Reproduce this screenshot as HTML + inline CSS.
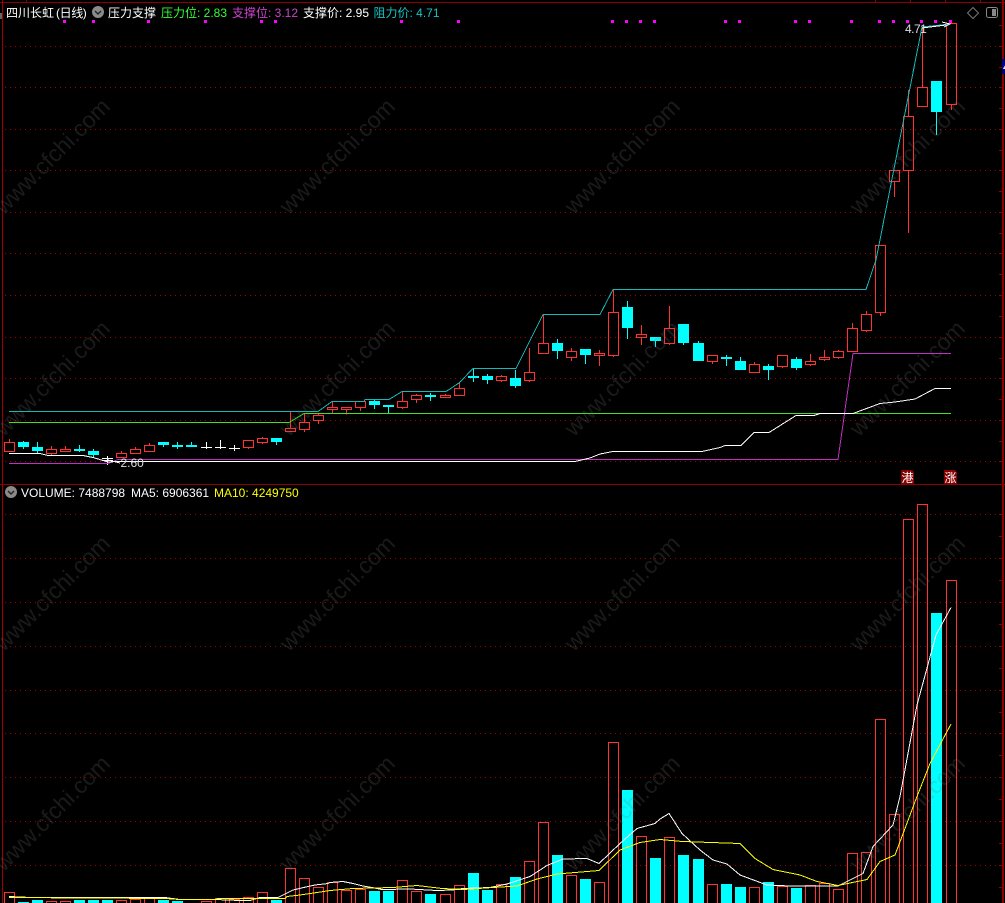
<!DOCTYPE html>
<html><head><meta charset="utf-8"><style>
html,body{margin:0;padding:0;background:#000;width:1005px;height:903px;overflow:hidden}
svg{display:block}
text{font-family:"Liberation Sans","WenQuanYi Zen Hei","Noto Sans CJK SC",sans-serif;font-size:12px}
.l{fill:none;stroke-width:1;shape-rendering:crispEdges}
.w{font-size:23px;fill:#777;opacity:.22}
</style></head><body>
<svg width="1005" height="903" viewBox="0 0 1005 903" xmlns="http://www.w3.org/2000/svg">
<rect width="1005" height="903" fill="#000"/>
<!-- grid -->
<path class="l" stroke="#a00000" stroke-dasharray="1 4" d="M5 46.5H1001M5 87.5H1001M5 129.5H1001M5 170.5H1001M5 212.5H1001M5 253.5H1001M5 295.5H1001M5 337.5H1001M5 378.5H1001M5 420.5H1001M5 461.5H1001M5 514.5H1001M5 558.5H1001M5 602.5H1001M5 646.5H1001M5 690.5H1001M5 733.5H1001M5 777.5H1001M5 821.5H1001M5 865.5H1001"/>
<!-- frame -->
<path fill="#8c0000" d="M1002 0h2v903h-2zM0 2h1005v1H0zM0 484h1005v1H0zM26 0h1v2h-1zM875 0h1v2h-1zM910 0h1v2h-1zM945 0h1v2h-1zM980 0h1v2h-1z"/>
<rect x="2" y="0" width="1" height="903" fill="#a00000"/>
<path class="l" stroke="#8c0000" d="M999 25.5h3M999 46.5h3M999 67.5h3M999 87.5h3M999 108.5h3M999 129.5h3M999 150.5h3M999 170.5h3M999 191.5h3M999 212.5h3M999 233.5h3M999 253.5h3M999 274.5h3M999 295.5h3M999 316.5h3M999 337.5h3M999 358.5h3M999 378.5h3M999 399.5h3M999 420.5h3M999 441.5h3M999 461.5h3M999 514.5h3M999 536.5h3M999 558.5h3M999 580.5h3M999 602.5h3M999 624.5h3M999 646.5h3M999 668.5h3M999 690.5h3M999 712.5h3M999 733.5h3M999 755.5h3M999 777.5h3M999 799.5h3M999 821.5h3M999 843.5h3M999 865.5h3M999 887.5h3"/>
<rect x="0" y="13" width="2" height="6" fill="#666"/>
<!-- red candles -->
<path class="l" stroke="#ff3232" d="M9.5 439V442.5M4.5 442.5h10v9h-10zM51.5 446V449.5M46.5 449.5h10v4h-10zM51.5 453.5V455M65.5 446V449.5M60.5 449.5h10v2h-10zM121.5 451V453.5M116.5 453.5h10v4h-10zM135.5 447V449.5M130.5 449.5h10v4h-10zM149.5 443V445.5M144.5 445.5h10v6h-10zM243.5 440.5h10v7h-10zM248.5 447.5V449M262.5 437V438.5M257.5 438.5h10v4h-10zM262.5 442.5V444M290.5 411V428.5M285.5 428.5h10v3h-10zM304.5 413V422.5M299.5 422.5h10v7h-10zM304.5 429.5V432M318.5 413V415.5M313.5 415.5h10v5h-10zM318.5 420.5V424M332.5 402V407.5M327.5 407.5h10v2h-10zM332.5 409.5V413M341.5 407.5h10v2h-10zM346.5 409.5V414.5M355.5 401.5h10v6h-10zM360.5 407.5V411M402.5 391.5V401.5M397.5 401.5h10v6h-10zM402.5 407.5V409M416.5 394V395.5M411.5 395.5h10v4h-10zM416.5 399.5V403M445.5 394V395.5M440.5 395.5h10v2h-10zM459.5 383V388.5M454.5 388.5h10v7h-10zM501.5 375V376.5M496.5 376.5h10v4h-10zM501.5 380.5V382M529.5 348V372.5M524.5 372.5h10v8h-10zM529.5 380.5V382M543.5 314V343.5M538.5 343.5h10v10h-10zM571.5 348V351.5M566.5 351.5h10v6h-10zM571.5 357.5V361M599.5 350V353.5M594.5 353.5h10v2h-10zM599.5 355.5V366M613.5 290V312.5M608.5 312.5h10v43h-10zM613.5 355.5V357M641.5 325V334.5M636.5 334.5h10v3h-10zM641.5 337.5V345M669.5 306V328.5M664.5 328.5h10v15h-10zM669.5 343.5V345M707.5 355.5h10v6h-10zM712.5 361.5V364M754.5 362V364.5M749.5 364.5h10v8h-10zM754.5 372.5V373M777.5 355.5h10v11h-10zM782.5 366.5V368M810.5 354V361.5M805.5 361.5h10v3h-10zM810.5 364.5V366M824.5 350V357.5M819.5 357.5h10v2h-10zM824.5 359.5V361M838.5 350V351.5M833.5 351.5h10v6h-10zM838.5 357.5V359M852.5 323V328.5M847.5 328.5h10v23h-10zM866.5 311V314.5M861.5 314.5h10v16h-10zM866.5 330.5V332M875.5 245.5h10v67h-10zM880.5 312.5V316M889.5 170.5h10v11h-10zM894.5 181.5V197M908.5 90V116.5M903.5 116.5h10v54h-10zM908.5 170.5V233M922.5 27V87.5M917.5 87.5h10v19h-10zM946.5 23.5h10v81h-10zM951.5 104.5V110"/>
<!-- cyan candles -->
<path class="l" stroke="#00ffff" d="M23.5 441V449M37.5 442V453M79.5 445V452M93.5 449V457M163.5 442V447M177.5 442V449M191.5 442V447M276.5 438V445M374.5 399V409M388.5 405V414M430.5 393V401M473.5 369V382M487.5 374V384M515.5 370V388M557.5 339V359M585.5 349V364M627.5 301V339M655.5 337V347M683.5 324V345M698.5 341V361M726.5 355V366M740.5 357V370M768.5 364V380M796.5 357V370M936.5 81V135"/>
<path fill="#00ffff" d="M18 442h11v5h-11zM32 447h11v4h-11zM74 449h11v2h-11zM88 451h11v4h-11zM158 442h11v3h-11zM172 445h11v2h-11zM186 445h11v2h-11zM271 438h11v4h-11zM369 401h11v4h-11zM383 405h11v2h-11zM425 395h11v2h-11zM468 376h11v2h-11zM482 376h11v4h-11zM510 378h11v8h-11zM552 343h11v8h-11zM580 349h11v6h-11zM622 307h11v21h-11zM650 337h11v4h-11zM678 324h11v19h-11zM693 343h11v18h-11zM721 357h11v2h-11zM735 361h11v9h-11zM763 366h11v4h-11zM791 359h11v9h-11zM931 81h11v31h-11z"/>
<!-- white doji -->
<path class="l" stroke="#fff" d="M107.5 456V465M102 458.5h11M102 460.5h11M206.5 442V449M201 447.5h11M220.5 440V449M215 447.5h11M234.5 445V451M229 448.5h11"/>
<!-- price lines -->
<polyline class="l" stroke="#44e022" points="9,422.5 289,422.5 304,413.5 951,413.5"/>
<polyline class="l" stroke="#14b8b8" points="9,411.5 318,411.5 332,401.5 364,401.5 365,399.5 389,399.5 402,391.5 446,391.5 459,383 473,368.5 516,368.5 543,314.5 600,314.5 613,289.5 866,289.5 876,260 922,27 950,24"/>
<polyline class="l" stroke="#c030c0" points="9,463.5 108,463.5 118,459.5 838,459.5 853,353.5 951,353.5"/>
<polyline class="l" stroke="#fff" points="9,453.5 40,453.5 48,455.5 83,455.5 93,457.5 108,462 118,461.5 575,461.5 590,458 600,454 613,451.5 702,451.5 720,447.5 725,445.5 741,445.5 754,432.5 769,432.5 796,415.5 814,415.5 820,413.5 853,413.5 880,403.5 895,402 915,399 935,388.5 951,388.5"/>
<path class="l" stroke="#fff" d="M922 28L946 25M942 22L950 24L944 27M108 460L120 463"/>
<!-- dots -->
<path fill="#ff00ff" d="M63 20h3v3h-3zM92 20h3v3h-3zM147 20h3v3h-3zM204 20h3v3h-3zM260 20h3v3h-3zM274 20h3v3h-3zM400 20h3v3h-3zM457 20h3v3h-3zM611 20h3v3h-3zM625 20h3v3h-3zM639 20h3v3h-3zM653 20h3v3h-3zM724 20h3v3h-3zM738 20h3v3h-3zM794 20h3v3h-3zM808 20h3v3h-3zM850 20h3v3h-3zM878 20h3v3h-3zM892 20h3v3h-3zM906 20h3v3h-3zM920 20h3v3h-3zM934 20h3v3h-3zM949 20h3v3h-3z"/>
<!-- volume red -->
<path class="l" stroke="#ff3232" d="M4.5 904V892.5H14.5V904M46.5 904V901.5H56.5V904M60.5 904V901.5H70.5V904M116.5 904V900.5H126.5V904M130.5 904V899.5H140.5V904M144.5 904V897.5H154.5V904M201.5 904V901.5H211.5V904M215.5 904V898.5H225.5V904M229.5 904V899.5H239.5V904M243.5 904V897.5H253.5V904M257.5 904V892.5H267.5V904M285.5 904V868.5H295.5V904M299.5 904V878.5H309.5V904M313.5 904V887.5H323.5V904M327.5 904V882.5H337.5V904M341.5 904V890.5H351.5V904M355.5 904V889.5H365.5V904M397.5 904V880.5H407.5V904M411.5 904V891.5H421.5V904M440.5 904V894.5H450.5V904M454.5 904V885.5H464.5V904M496.5 904V884.5H506.5V904M524.5 904V861.5H534.5V904M538.5 904V822.5H548.5V904M566.5 904V875.5H576.5V904M594.5 904V882.5H604.5V904M608.5 904V742.5H618.5V904M636.5 904V836.5H646.5V904M664.5 904V837.5H674.5V904M707.5 904V884.5H717.5V904M749.5 904V887.5H759.5V904M777.5 904V886.5H787.5V904M805.5 904V885.5H815.5V904M819.5 904V883.5H829.5V904M833.5 904V889.5H843.5V904M847.5 904V853.5H857.5V904M861.5 904V852.5H871.5V904M875.5 904V719.5H885.5V904M889.5 904V814.5H899.5V904M903.5 904V519.5H913.5V904M917.5 904V504.5H927.5V904M946.5 904V580.5H956.5V904"/>
<!-- volume cyan -->
<path fill="#00ffff" d="M18 902h11v2h-11zM32 900h11v4h-11zM74 900h11v4h-11zM88 900h11v4h-11zM102 900h11v4h-11zM158 900h11v4h-11zM172 901h11v3h-11zM271 900h11v4h-11zM369 891h11v13h-11zM383 891h11v13h-11zM425 894h11v10h-11zM468 873h11v31h-11zM482 890h11v14h-11zM510 877h11v27h-11zM552 855h11v49h-11zM580 879h11v25h-11zM622 790h11v114h-11zM650 858h11v46h-11zM678 855h11v49h-11zM693 859h11v45h-11zM721 884h11v20h-11zM735 887h11v17h-11zM763 882h11v22h-11zM791 888h11v16h-11zM931 613h11v291h-11z"/>
<!-- MAs -->
<polyline class="l" stroke="#fff" points="9,896.5 31,897.5 93,897.5 165,897.5 180,899.5 215,899.5 240,900.5 250,900.5 260,897.5 278,897.5 283,895 293,890 308,886.5 315,885 328,883.5 330,882.5 343,881.5 353,883.5 363,886 372,887.5 382,889.5 410,889 437,890.5 452,890 463,888.5 490,887.5 507,884 530,876.5 547,865.5 563,859 587,858.5 599,863.5 620,843.5 637,828.5 655,823.5 660,819 669,813.5 682,833.5 700,850 713,860 727,864 740,875 767,885 790,886 815,886 838,886 863,873.5 873,846.5 893,825 900,796.5 917,705 936,635 951,607.5"/>
<polyline class="l" stroke="#ffff00" points="9,897.5 93,898 165,898.5 180,899.5 215,899.5 218,898.5 285,898.5 287,896.5 300,895 317,892.5 330,890.5 353,888.5 393,887.5 417,885.5 442,888.5 463,889.5 493,887.5 517,886 537,879 557,874 599,870.5 620,850 640,842.5 660,839.5 682,841.5 740,843.5 755,858.5 773,869.5 800,875 817,881.5 838,885.5 867,879.5 880,861.5 895,855 917,796.5 930,763.5 951,724"/>
<!-- watermarks -->
<g text-anchor="middle">
<text class="w" transform="translate(52 156) rotate(-45) translate(0 8)">www.cfchi.com</text>
<text class="w" transform="translate(337 156) rotate(-45) translate(0 8)">www.cfchi.com</text>
<text class="w" transform="translate(622 156) rotate(-45) translate(0 8)">www.cfchi.com</text>
<text class="w" transform="translate(907 156) rotate(-45) translate(0 8)">www.cfchi.com</text>
<text class="w" transform="translate(52 378) rotate(-45) translate(0 8)">www.cfchi.com</text>
<text class="w" transform="translate(337 378) rotate(-45) translate(0 8)">www.cfchi.com</text>
<text class="w" transform="translate(622 378) rotate(-45) translate(0 8)">www.cfchi.com</text>
<text class="w" transform="translate(907 378) rotate(-45) translate(0 8)">www.cfchi.com</text>
<text class="w" transform="translate(52 593) rotate(-45) translate(0 8)">www.cfchi.com</text>
<text class="w" transform="translate(337 593) rotate(-45) translate(0 8)">www.cfchi.com</text>
<text class="w" transform="translate(622 593) rotate(-45) translate(0 8)">www.cfchi.com</text>
<text class="w" transform="translate(907 593) rotate(-45) translate(0 8)">www.cfchi.com</text>
<text class="w" transform="translate(52 813) rotate(-45) translate(0 8)">www.cfchi.com</text>
<text class="w" transform="translate(337 813) rotate(-45) translate(0 8)">www.cfchi.com</text>
<text class="w" transform="translate(622 813) rotate(-45) translate(0 8)">www.cfchi.com</text>
<text class="w" transform="translate(907 813) rotate(-45) translate(0 8)">www.cfchi.com</text>
</g>
<!-- header -->
<rect x="4" y="5" width="436" height="15" fill="#000"/>
<text x="6" y="17" fill="#fff">四川长虹</text>
<text x="56" y="17" fill="#fff" letter-spacing="-0.4">(日线)</text>
<circle cx="98" cy="12" r="6" fill="#8a8a8a"/>
<path d="M95 11l3 3l3-3" fill="none" stroke="#222" stroke-width="1.4"/>
<text x="108" y="17" fill="#fff">压力支撑</text>
<text x="161" y="17" fill="#33ff33">压力位: 2.83</text>
<text x="232" y="17" fill="#cc44cc">支撑位: 3.12</text>
<text x="303" y="17" fill="#fff">支撑价: 2.95</text>
<text x="373.5" y="17" fill="#14c4c4">阻力价: 4.71</text>
<!-- top right -->
<path d="M973 7.5L978.5 13L973 18.5L967.500 13Z" fill="none" stroke="#777"/>
<rect x="986.500" y="7.500" width="11" height="10" rx="2" fill="none" stroke="#888"/>
<rect x="992" y="9" width="4" height="7" fill="#888"/>
<rect x="1002" y="59" width="3" height="15" fill="#000080"/>
<text x="1003" y="71" fill="#fff">4</text>
<!-- labels -->
<text x="120.500" y="467" fill="#ddd">2.60</text>
<text x="905" y="33" fill="#ddd" letter-spacing="-0.5">4.71</text>
<path d="M901 470h11l2 2v12h-13z" fill="#860000"/>
<text x="901.500" y="482" fill="#fff">港</text>
<path d="M944 470h11l2 2v12h-13z" fill="#860000"/>
<text x="944.500" y="482" fill="#fff">涨</text>
<!-- volume header -->
<circle cx="11" cy="492" r="6" fill="#8a8a8a"/>
<path d="M8 491l3 3l3-3" fill="none" stroke="#222" stroke-width="1.4"/>
<text x="21" y="497" fill="#fff">VOLUME: 7488798</text>
<text x="131" y="497" fill="#fff">MA5: 6906361</text>
<text x="214" y="497" fill="#ffff00">MA10: 4249750</text>
</svg>
</body></html>
